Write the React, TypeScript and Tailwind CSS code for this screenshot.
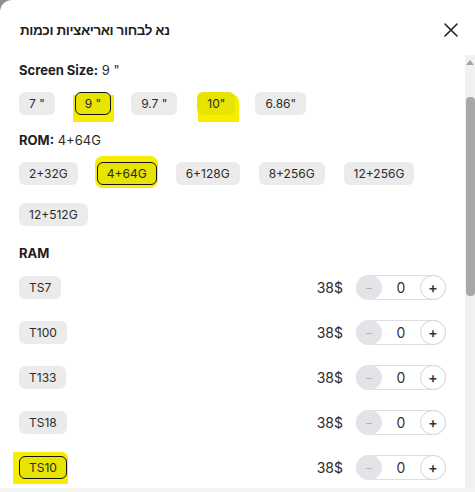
import React from "react";

const font = { fontFamily: "Inter, 'Noto Sans', sans-serif" };

function Chip({
  label,
  selected = false,
  hl,
}: {
  label: string;
  selected?: boolean;
  hl?: string;
}) {
  return (
    <div className="relative">
      {hl && <div className={`absolute bg-[#f8ec00] ${hl}`} />}
      <div
        className={`relative flex h-[23px] items-center rounded-[6px] text-[12px] text-[#2b2b2b] ${
          hl ? "bg-[#e6e400]" : "bg-[#ebebeb]"
        } ${selected ? "border border-[#111] px-[9px]" : "px-[10px]"}`}
      >
        {label}
      </div>
    </div>
  );
}

function Stepper() {
  return (
    <div className="flex h-[25px] w-[90px] items-center justify-between rounded-full border border-[#dedee3]">
      <div className="-ml-px flex h-[25px] w-[26px] items-center justify-center rounded-full bg-[#e4e4e8] text-[12px] text-[#b0b0b8]">
        −
      </div>
      <div className="text-[14px] text-[#333]">0</div>
      <div className="-mr-px flex h-[25px] w-[26px] items-center justify-center rounded-full border border-[#d4d4dc] bg-white text-[14px] font-semibold text-[#333]">
        +
      </div>
    </div>
  );
}

function RamRow({ label, hl }: { label: string; hl?: string }) {
  return (
    <div className="flex h-[45px] items-center justify-between pr-[19px]">
      <Chip label={label} selected={!!hl} hl={hl} />
      <div className="flex items-center gap-[13px]">
        <span className="text-[14px] text-[#2b2b2b]">38$</span>
        <Stepper />
      </div>
    </div>
  );
}

export default function App() {
  return (
    <div className="h-[492px] w-[475px] overflow-hidden bg-[#8f8f8f]" style={font}>
      <div className="flex h-full w-full flex-col rounded-tl-[12px] bg-white">
        <div className="flex h-[55px] shrink-0 items-center justify-between pl-[20px] pr-[17px] pt-[7px]">
          <div
            className="text-[13.5px] font-bold tracking-[-0.4px] text-[#1e1e1e]"
            dir="rtl"
            style={{ fontFamily: "'Liberation Sans', Arial, sans-serif" }}
          >
            נא לבחור ואריאציות וכמות
          </div>
          <svg width="14" height="14" viewBox="0 0 14 14" className="mt-[-2px]">
            <path d="M1 1 L13 13 M13 1 L1 13" stroke="#222" strokeWidth="1.6" strokeLinecap="round" />
          </svg>
        </div>
        <div className="flex min-h-0 flex-1">
          <div className="flex-1 pl-[19px] pt-[6px]">
            <div className="text-[13px] leading-[18px] text-[#2b2b2b]">
              <span className="font-bold text-[#1e1e1e]">Screen Size:</span> 9 "
            </div>
            <div className="mt-[13px] flex gap-[20px]">
              <Chip label={'7 "'} />
              <Chip label={'9 "'} selected hl="left-[-2px] right-[-3px] top-[3px] bottom-[-7px]" />
              <Chip label={'9.7 "'} />
              <Chip label={'10"'} hl="left-[1px] right-[-4px] top-[2px] bottom-[-7px] rounded-tr-[8px]" />
              <Chip label={'6.86"'} />
            </div>
            <div className="mt-[16px] text-[13px] leading-[18px] text-[#2b2b2b]">
              <span className="font-bold text-[#1e1e1e]">ROM:</span> 4+64G
            </div>
            <div className="mt-[13px] flex flex-wrap gap-x-[19px] gap-y-[18px] pr-[19px]">
              <Chip label="2+32G" />
              <Chip label="4+64G" selected hl="left-[-2px] right-[-1px] top-[-6px] bottom-[-3px] rounded-[8px]" />
              <Chip label="6+128G" />
              <Chip label="8+256G" />
              <Chip label="12+256G" />
              <Chip label="12+512G" />
            </div>
            <div className="mt-[18px] text-[13px] font-bold leading-[18px] text-[#1e1e1e]">RAM</div>
            <div className="mt-[3px]">
              <RamRow label="TS7" />
              <RamRow label="T100" />
              <RamRow label="T133" />
              <RamRow label="TS18" />
              <RamRow label="TS10" hl="left-[-6px] right-[-1px] top-[-4px] bottom-[-5px] rounded-tr-[6px]" />
            </div>
          </div>
          <div className="relative w-[10px] bg-[#f1f1f1]">
            <div className="mx-auto mt-[5px] h-0 w-0 border-x-[4px] border-b-[5px] border-x-transparent border-b-[#a3a3a3]" />
            <div className="absolute left-[1px] right-0 top-[42px] h-[199px] rounded-[4px] bg-[#a8a8a8]" />
          </div>
        </div>
        <div className="h-[4px] shrink-0 bg-[#f4f4f4]" />
      </div>
    </div>
  );
}
